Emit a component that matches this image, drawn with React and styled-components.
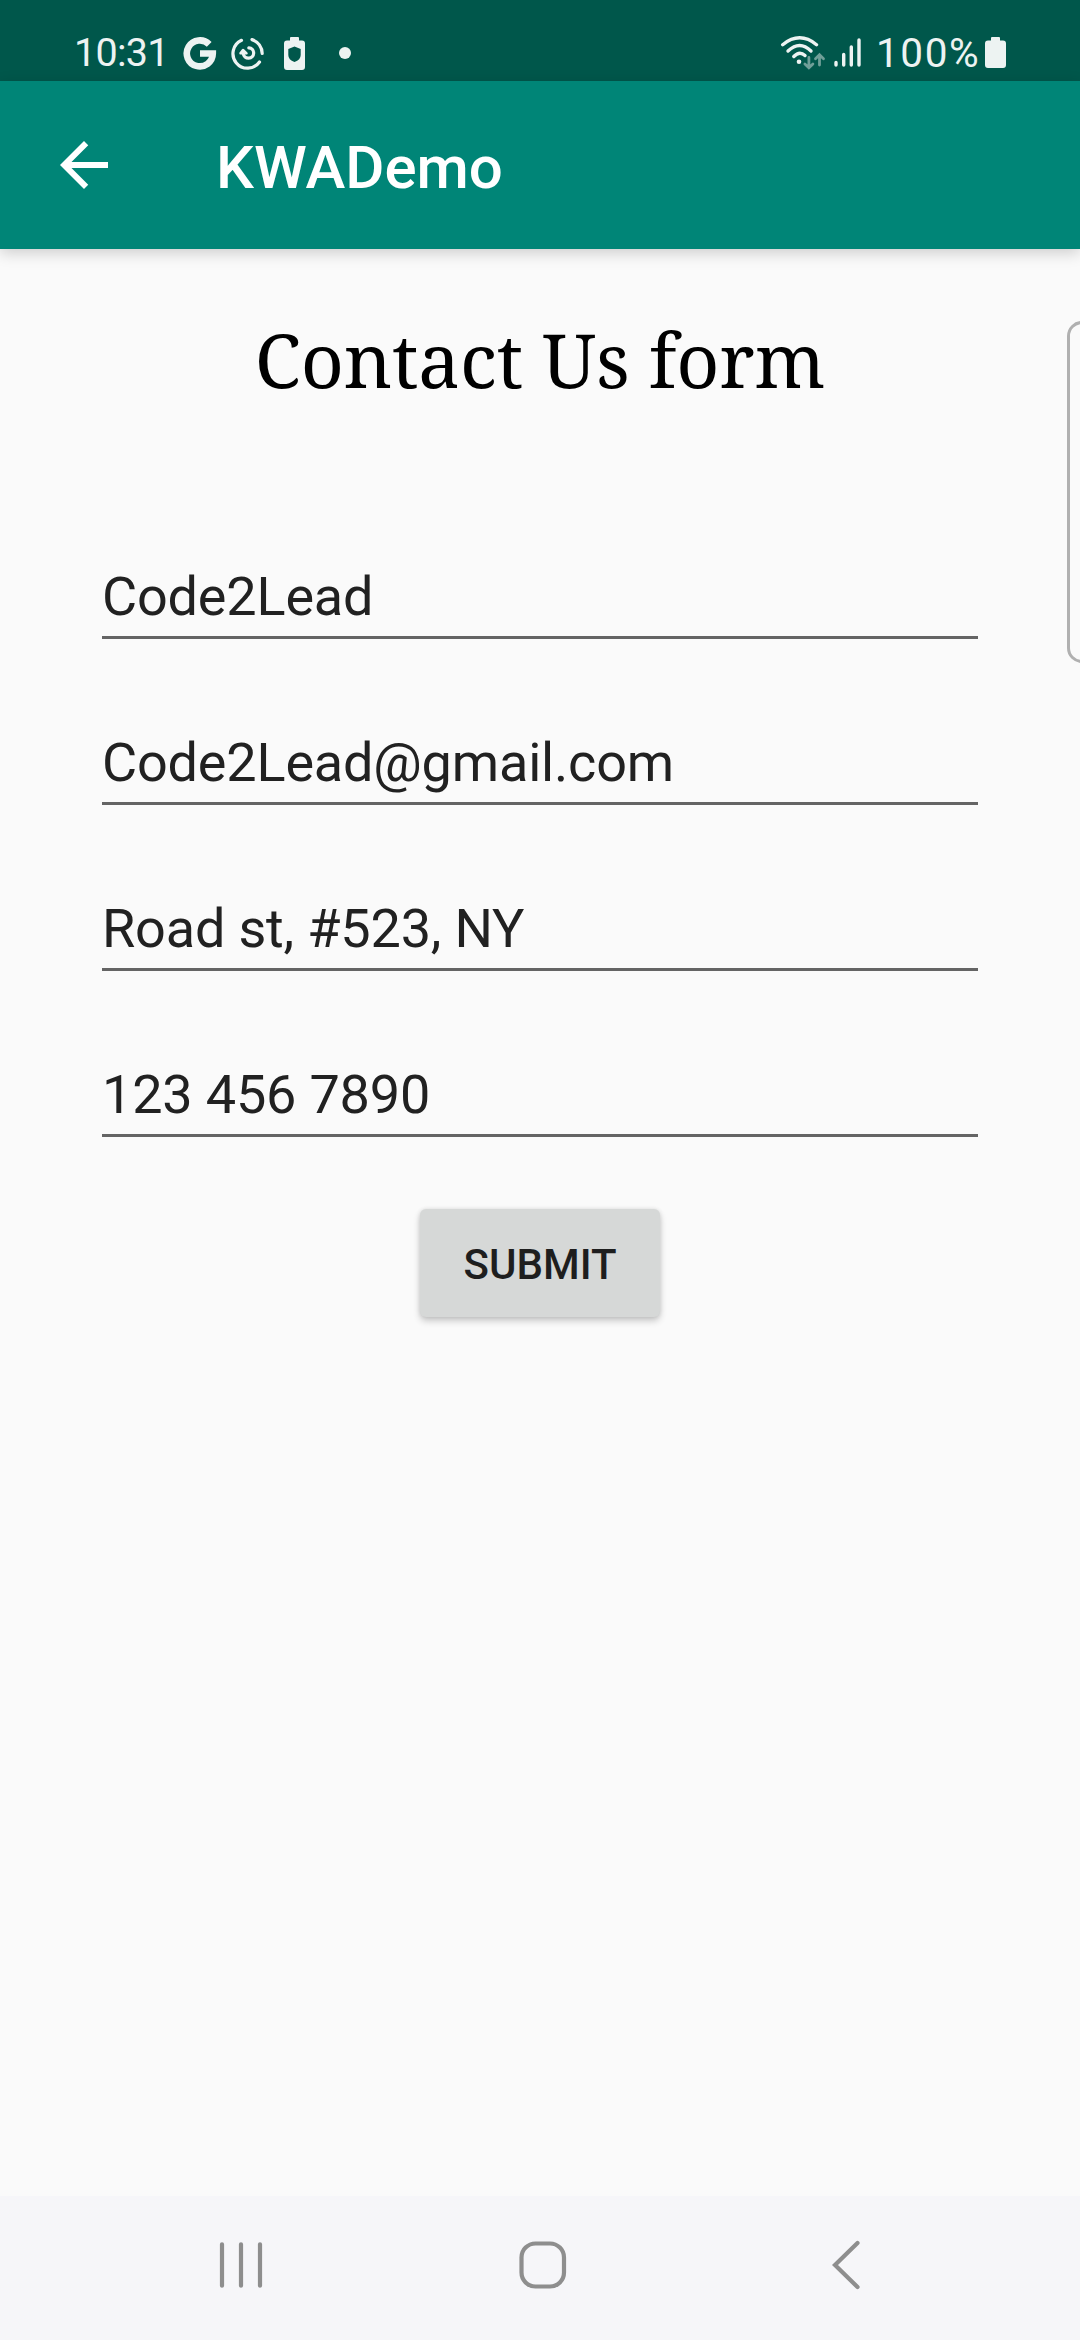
import React from "react";
import styled, { createGlobalStyle } from "styled-components";

const GlobalStyle = createGlobalStyle`
  * { box-sizing: border-box; }
  body { margin: 0; background: #fafafa; }
`;

const Screen = styled.div`
  position: relative;
  display: flex;
  flex-direction: column;
  width: 1080px;
  height: 2340px;
  overflow: hidden;
  background: #fafafa;
  font-family: Roboto, sans-serif;
`;

const StatusBar = styled.header`
  display: flex;
  flex: none;
  align-items: flex-start;
  justify-content: space-between;
  height: 81px;
  padding: 30px 70px 0 74px;
  background: #00574b;
  color: #edf3f2;
`;

const StatusGroup = styled.div`
  display: flex;
  align-items: flex-start;
  height: 46px;
`;

const StatusText = styled.span`
  width: ${(p) => p.$width}px;
  margin-left: ${(p) => p.$gap || 0}px;
  font-size: ${(p) => p.$size || 39.5}px;
  line-height: 46px;
  letter-spacing: ${(p) => p.$spacing || 0}px;
  white-space: nowrap;
`;

const Glyph = styled.svg`
  display: block;
  flex: none;
  margin-left: ${(p) => p.$gap || 0}px;
`;

const AppBar = styled.nav`
  z-index: 1;
  display: flex;
  flex: none;
  align-items: center;
  height: 168px;
  padding-left: 48px;
  background: #008577;
  box-shadow: 0 4px 14px rgba(0, 0, 0, 0.18);
`;

const BackButton = styled.button`
  display: flex;
  padding: 0;
  border: 0;
  background: none;
`;

const AppTitle = styled.h1`
  margin: 0 0 0 96px;
  padding-top: 6px;
  color: #fff;
  font-size: 60px;
  font-weight: 500;
  line-height: 70px;
`;

const Content = styled.main`
  display: flex;
  flex: 1;
  flex-direction: column;
  align-items: center;
`;

const FormTitle = styled.h2`
  margin: 59px 0 0;
  color: #000;
  font-family: "Noto Serif", "DejaVu Serif Condensed", "DejaVu Serif", serif;
  font-size: 75px;
  font-weight: 400;
  line-height: 102px;
  letter-spacing: -0.2px;
  white-space: nowrap;
`;

const Form = styled.form`
  display: flex;
  flex-direction: column;
  align-items: center;
  width: 876px;
  margin-top: 63px;
`;

const Field = styled.input`
  width: 100%;
  height: 96px;
  margin-top: 70px;
  padding: 13px 0 0;
  border: 0;
  border-bottom: 3px solid #646464;
  border-radius: 0;
  outline: 0;
  background: transparent;
  color: #212121;
  font: 400 54px/64px Roboto, sans-serif;
  letter-spacing: -0.18px;
`;

const SubmitButton = styled.button`
  width: 240px;
  height: 108px;
  margin-top: 72px;
  padding: 4px 0 0;
  border: 0;
  border-radius: 6px;
  background: #d6d8d7;
  box-shadow: 0 4px 7px rgba(0, 0, 0, 0.2), 0 0 4px rgba(0, 0, 0, 0.1);
  color: #1e1e1e;
  font: 500 42px/50px Roboto, sans-serif;
`;

const EdgeHandle = styled.div`
  position: absolute;
  top: 321px;
  left: 1067px;
  width: 40px;
  height: 342px;
  border: 3px solid #b0b0b0;
  border-radius: 15px;
`;

const NavBar = styled.footer`
  display: flex;
  flex: none;
  align-items: center;
  justify-content: space-between;
  height: 144px;
  padding: 0 216px 6px 217px;
  background: #f6f6f9;
`;

const entries = [
  ["name", "Code2Lead"],
  ["email", "Code2Lead@gmail.com"],
  ["address", "Road st, #523, NY"],
  ["phone", "123 456 7890"],
];

const GoogleIcon = () => (
  <Glyph width="34" height="46" viewBox="183 30 34 46" fill="none" stroke="currentColor" strokeWidth="6.6">
    <path d="M209.2 44.4A13 13 0 1 0 212.8 53.5H200" />
  </Glyph>
);

const SyncIcon = () => (
  <Glyph $gap={13} width="36" height="46" viewBox="230 30 36 46" fill="none" stroke="currentColor" strokeWidth="3.2" strokeLinecap="round">
    <path d="M241.5 40.3A14.6 14.6 0 1 0 259.5 62" />
    <path d="M252 39.6A14.6 14.6 0 0 1 262.2 53.5" />
    <path d="M243.3 53.5A5.2 5.2 0 1 0 248.8 47.8" />
    <path d="M240.5 53.3L243 50L246.5 53.3Z" fill="currentColor" strokeWidth="2.5" strokeLinejoin="round" />
  </Glyph>
);

const ShieldBatteryIcon = () => (
  <Glyph $gap={17} width="24" height="46" viewBox="283 30 24 46" fill="currentColor">
    <path fillRule="evenodd" d="M291 37h7q1 0 1 1v2.5h3q3 0 3 3V67q0 3-3 3h-15q-3 0-3-3V43.5q0-3 3-3h3V38q0-1 1-1zM294.5 46.5l-6.2 2.4v6q0 4.8 6.2 7 6.2-2.2 6.2-7v-6z" />
  </Glyph>
);

const WifiIcon = () => (
  <Glyph width="46" height="46" viewBox="780 30 46 46" fill="none" stroke="currentColor" strokeLinecap="round">
    <g strokeWidth="3.4">
      <path d="M782.7 44.7Q799.7 31 816.5 44.7" />
      <path d="M788 51Q799.7 40 811 51" />
      <path d="M793.8 56.5Q799.5 50.5 805 55.5" />
    </g>
    <circle cx="799" cy="61.7" r="2.3" fill="currentColor" stroke="none" />
    <g stroke="#6f9f98" strokeWidth="2.8">
      <path d="M808.9 57.5V67.5M804.9 64L808.9 67.8L812.9 64" />
      <path d="M819.5 65V55M815.5 58.7L819.5 54.8L823.5 58.7" />
    </g>
  </Glyph>
);

const SignalIcon = () => (
  <Glyph $gap={7} width="30" height="46" viewBox="833 30 30 46" stroke="currentColor" strokeWidth="3.4" strokeLinecap="round">
    <path d="M836 62.5V65M843.7 54.5V65M851.3 47V65M859 40V65" />
  </Glyph>
);

const BatteryIcon = () => (
  <Glyph width="25" height="46" viewBox="985 30 25 46" fill="currentColor">
    <path d="M992 37h7q1 0 1 1v2.5h3q3 0 3 3V65q0 3-3 3h-15q-3 0-3-3V43.5q0-3 3-3h3V38q0-1 1-1z" />
  </Glyph>
);

export default function App() {
  return (
    <Screen>
      <GlobalStyle />
      <StatusBar>
        <StatusGroup>
          <StatusText $width={109} $spacing={-0.7}>10:31</StatusText>
          <GoogleIcon />
          <SyncIcon />
          <ShieldBatteryIcon />
          <Glyph $gap={31} width="14" height="46" fill="currentColor">
            <circle cx="7" cy="23" r="6" />
          </Glyph>
        </StatusGroup>
        <StatusGroup>
          <WifiIcon />
          <SignalIcon />
          <StatusText $gap={13} $width={109} $size={40.5} $spacing={1.6}>100%</StatusText>
          <BatteryIcon />
        </StatusGroup>
      </StatusBar>
      <AppBar>
        <BackButton aria-label="Back">
          <Glyph width="72" height="72" viewBox="0 0 24 24" fill="#fff">
            <path d="M20 11H7.83l5.59-5.59L12 4l-8 8 8 8 1.41-1.41L7.83 13H20z" />
          </Glyph>
        </BackButton>
        <AppTitle>KWADemo</AppTitle>
      </AppBar>
      <Content>
        <FormTitle>Contact Us form</FormTitle>
        <Form>
          {entries.map(([name, value]) => (
            <Field key={name} name={name} defaultValue={value} />
          ))}
          <SubmitButton type="button">SUBMIT</SubmitButton>
        </Form>
      </Content>
      <EdgeHandle />
      <NavBar>
        <Glyph width="48" height="54" viewBox="217 2238 48 54" stroke="#8e8e8e" strokeWidth="4.2" strokeLinecap="round">
          <path d="M222 2244.3V2285.7M241 2244.3V2285.7M260 2244.3V2285.7" />
        </Glyph>
        <Glyph width="63" height="54" viewBox="516 2238 63 54" fill="none" stroke="#8e8e8e" strokeWidth="4.2">
          <rect x="521.5" y="2243.5" width="42.5" height="43" rx="14" />
        </Glyph>
        <Glyph width="34" height="54" viewBox="830 2238 34 54" fill="none" stroke="#8e8e8e" strokeWidth="4.2" strokeLinecap="round">
          <path d="M857.5 2243L835 2265L857.5 2287" />
        </Glyph>
      </NavBar>
    </Screen>
  );
}
